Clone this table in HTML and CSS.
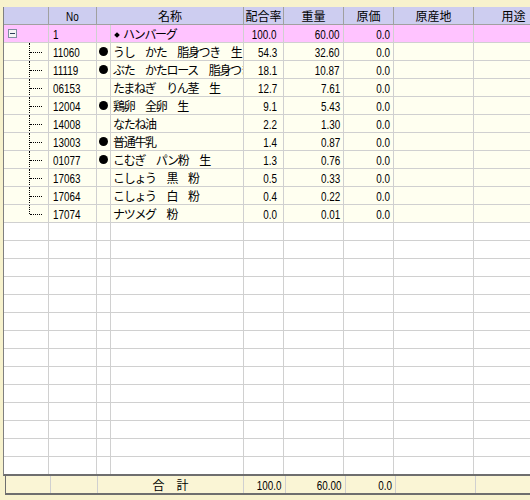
FILE: index.html
```html
<!DOCTYPE html>
<html lang="ja">
<head>
<meta charset="utf-8">
<link rel="stylesheet" href="styles.css">
</head>
<body>
<div class="grid">
  <div class="row head">
    <div class="cell c0"></div>
    <div class="cell c1 ctr"><span class="n">No</span></div>
    <div class="cell c23 ctr">名称</div>
    <div class="cell c4 ctr">配合率</div>
    <div class="cell c5 ctr">重量</div>
    <div class="cell c6 ctr">原価</div>
    <div class="cell c7 ctr">原産地</div>
    <div class="cell c8 ctr">用途</div>
  </div>
  <div class="row pink">
    <div class="cell c0"><span class="toggle"></span></div>
    <div class="cell c1"><span class="n">1</span></div>
    <div class="cell c2"></div>
    <div class="cell c3"><span class="dia"></span>ハンバーグ</div>
    <div class="cell c4 r"><span class="n">100.0</span></div>
    <div class="cell c5 r"><span class="n">60.00</span></div>
    <div class="cell c6 r"><span class="n">0.0</span></div>
    <div class="cell c7"></div>
    <div class="cell c8"></div>
  </div>
  <div class="row data">
    <div class="cell c0 tree"></div>
    <div class="cell c1"><span class="n">11060</span></div>
    <div class="cell c2"><span class="dot"></span></div>
    <div class="cell c3">うし　かた　脂身つき　生</div>
    <div class="cell c4 r"><span class="n">54.3</span></div>
    <div class="cell c5 r"><span class="n">32.60</span></div>
    <div class="cell c6 r"><span class="n">0.0</span></div>
    <div class="cell c7"></div>
    <div class="cell c8"></div>
  </div>
  <div class="row data">
    <div class="cell c0 tree"></div>
    <div class="cell c1"><span class="n">11119</span></div>
    <div class="cell c2"><span class="dot"></span></div>
    <div class="cell c3">ぶた　かたロース　脂身つき　生</div>
    <div class="cell c4 r"><span class="n">18.1</span></div>
    <div class="cell c5 r"><span class="n">10.87</span></div>
    <div class="cell c6 r"><span class="n">0.0</span></div>
    <div class="cell c7"></div>
    <div class="cell c8"></div>
  </div>
  <div class="row data">
    <div class="cell c0 tree"></div>
    <div class="cell c1"><span class="n">06153</span></div>
    <div class="cell c2"></div>
    <div class="cell c3">たまねぎ　りん茎　生</div>
    <div class="cell c4 r"><span class="n">12.7</span></div>
    <div class="cell c5 r"><span class="n">7.61</span></div>
    <div class="cell c6 r"><span class="n">0.0</span></div>
    <div class="cell c7"></div>
    <div class="cell c8"></div>
  </div>
  <div class="row data">
    <div class="cell c0 tree"></div>
    <div class="cell c1"><span class="n">12004</span></div>
    <div class="cell c2"><span class="dot"></span></div>
    <div class="cell c3">鶏卵　全卵　生</div>
    <div class="cell c4 r"><span class="n">9.1</span></div>
    <div class="cell c5 r"><span class="n">5.43</span></div>
    <div class="cell c6 r"><span class="n">0.0</span></div>
    <div class="cell c7"></div>
    <div class="cell c8"></div>
  </div>
  <div class="row data">
    <div class="cell c0 tree"></div>
    <div class="cell c1"><span class="n">14008</span></div>
    <div class="cell c2"></div>
    <div class="cell c3">なたね油</div>
    <div class="cell c4 r"><span class="n">2.2</span></div>
    <div class="cell c5 r"><span class="n">1.30</span></div>
    <div class="cell c6 r"><span class="n">0.0</span></div>
    <div class="cell c7"></div>
    <div class="cell c8"></div>
  </div>
  <div class="row data">
    <div class="cell c0 tree"></div>
    <div class="cell c1"><span class="n">13003</span></div>
    <div class="cell c2"><span class="dot"></span></div>
    <div class="cell c3">普通牛乳</div>
    <div class="cell c4 r"><span class="n">1.4</span></div>
    <div class="cell c5 r"><span class="n">0.87</span></div>
    <div class="cell c6 r"><span class="n">0.0</span></div>
    <div class="cell c7"></div>
    <div class="cell c8"></div>
  </div>
  <div class="row data">
    <div class="cell c0 tree"></div>
    <div class="cell c1"><span class="n">01077</span></div>
    <div class="cell c2"><span class="dot"></span></div>
    <div class="cell c3">こむぎ　パン粉　生</div>
    <div class="cell c4 r"><span class="n">1.3</span></div>
    <div class="cell c5 r"><span class="n">0.76</span></div>
    <div class="cell c6 r"><span class="n">0.0</span></div>
    <div class="cell c7"></div>
    <div class="cell c8"></div>
  </div>
  <div class="row data">
    <div class="cell c0 tree"></div>
    <div class="cell c1"><span class="n">17063</span></div>
    <div class="cell c2"></div>
    <div class="cell c3">こしょう　黒　粉</div>
    <div class="cell c4 r"><span class="n">0.5</span></div>
    <div class="cell c5 r"><span class="n">0.33</span></div>
    <div class="cell c6 r"><span class="n">0.0</span></div>
    <div class="cell c7"></div>
    <div class="cell c8"></div>
  </div>
  <div class="row data">
    <div class="cell c0 tree"></div>
    <div class="cell c1"><span class="n">17064</span></div>
    <div class="cell c2"></div>
    <div class="cell c3">こしょう　白　粉</div>
    <div class="cell c4 r"><span class="n">0.4</span></div>
    <div class="cell c5 r"><span class="n">0.22</span></div>
    <div class="cell c6 r"><span class="n">0.0</span></div>
    <div class="cell c7"></div>
    <div class="cell c8"></div>
  </div>
  <div class="row data">
    <div class="cell c0 tree last"></div>
    <div class="cell c1"><span class="n">17074</span></div>
    <div class="cell c2"></div>
    <div class="cell c3">ナツメグ　粉</div>
    <div class="cell c4 r"><span class="n">0.0</span></div>
    <div class="cell c5 r"><span class="n">0.01</span></div>
    <div class="cell c6 r"><span class="n">0.0</span></div>
    <div class="cell c7"></div>
    <div class="cell c8"></div>
  </div>
  <div class="row"><div class="cell c0"></div><div class="cell c1"></div><div class="cell c2"></div><div class="cell c3"></div><div class="cell c4"></div><div class="cell c5"></div><div class="cell c6"></div><div class="cell c7"></div><div class="cell c8"></div></div>
  <div class="row"><div class="cell c0"></div><div class="cell c1"></div><div class="cell c2"></div><div class="cell c3"></div><div class="cell c4"></div><div class="cell c5"></div><div class="cell c6"></div><div class="cell c7"></div><div class="cell c8"></div></div>
  <div class="row"><div class="cell c0"></div><div class="cell c1"></div><div class="cell c2"></div><div class="cell c3"></div><div class="cell c4"></div><div class="cell c5"></div><div class="cell c6"></div><div class="cell c7"></div><div class="cell c8"></div></div>
  <div class="row"><div class="cell c0"></div><div class="cell c1"></div><div class="cell c2"></div><div class="cell c3"></div><div class="cell c4"></div><div class="cell c5"></div><div class="cell c6"></div><div class="cell c7"></div><div class="cell c8"></div></div>
  <div class="row"><div class="cell c0"></div><div class="cell c1"></div><div class="cell c2"></div><div class="cell c3"></div><div class="cell c4"></div><div class="cell c5"></div><div class="cell c6"></div><div class="cell c7"></div><div class="cell c8"></div></div>
  <div class="row"><div class="cell c0"></div><div class="cell c1"></div><div class="cell c2"></div><div class="cell c3"></div><div class="cell c4"></div><div class="cell c5"></div><div class="cell c6"></div><div class="cell c7"></div><div class="cell c8"></div></div>
  <div class="row"><div class="cell c0"></div><div class="cell c1"></div><div class="cell c2"></div><div class="cell c3"></div><div class="cell c4"></div><div class="cell c5"></div><div class="cell c6"></div><div class="cell c7"></div><div class="cell c8"></div></div>
  <div class="row"><div class="cell c0"></div><div class="cell c1"></div><div class="cell c2"></div><div class="cell c3"></div><div class="cell c4"></div><div class="cell c5"></div><div class="cell c6"></div><div class="cell c7"></div><div class="cell c8"></div></div>
  <div class="row"><div class="cell c0"></div><div class="cell c1"></div><div class="cell c2"></div><div class="cell c3"></div><div class="cell c4"></div><div class="cell c5"></div><div class="cell c6"></div><div class="cell c7"></div><div class="cell c8"></div></div>
  <div class="row"><div class="cell c0"></div><div class="cell c1"></div><div class="cell c2"></div><div class="cell c3"></div><div class="cell c4"></div><div class="cell c5"></div><div class="cell c6"></div><div class="cell c7"></div><div class="cell c8"></div></div>
  <div class="row"><div class="cell c0"></div><div class="cell c1"></div><div class="cell c2"></div><div class="cell c3"></div><div class="cell c4"></div><div class="cell c5"></div><div class="cell c6"></div><div class="cell c7"></div><div class="cell c8"></div></div>
  <div class="row"><div class="cell c0"></div><div class="cell c1"></div><div class="cell c2"></div><div class="cell c3"></div><div class="cell c4"></div><div class="cell c5"></div><div class="cell c6"></div><div class="cell c7"></div><div class="cell c8"></div></div>
  <div class="row"><div class="cell c0"></div><div class="cell c1"></div><div class="cell c2"></div><div class="cell c3"></div><div class="cell c4"></div><div class="cell c5"></div><div class="cell c6"></div><div class="cell c7"></div><div class="cell c8"></div></div>
  <div class="row"><div class="cell c0"></div><div class="cell c1"></div><div class="cell c2"></div><div class="cell c3"></div><div class="cell c4"></div><div class="cell c5"></div><div class="cell c6"></div><div class="cell c7"></div><div class="cell c8"></div></div>
</div>
<div class="foot">
  <div class="fcell f0"></div>
  <div class="fcell f1"></div>
  <div class="fcell f2 ctr">合　計</div>
  <div class="fcell f3 r"><span class="n">100.0</span></div>
  <div class="fcell f4 r"><span class="n">60.00</span></div>
  <div class="fcell f5 r"><span class="n">0.0</span></div>
  <div class="fcell f6"></div>
  <div class="fcell f7"></div>
</div>
</body>
</html>
```

FILE: styles.css
```css
html, body {
  margin: 0;
  padding: 0;
}
body {
  width: 530px;
  height: 500px;
  overflow: hidden;
  background: #f7f2cd;
  font-family: "Noto Sans CJK JP", sans-serif;
  font-size: 12px;
  color: #000;
}
.grid {
  margin: 7px 0 0 3px;
  width: 560px;
  height: 467px;
  overflow: hidden;
  background: #fff;
  border-left: 1px solid #808080;
  border-bottom: 2px solid #6e6e6e;
}
.row {
  display: flex;
  height: 18px;
}
.cell {
  flex: none;
  box-sizing: border-box;
  height: 18px;
  line-height: 17px;
  border-right: 1px solid #d0d0d0;
  border-bottom: 1px solid #d0d0d0;
  overflow: hidden;
  white-space: nowrap;
  position: relative;
}
.c0 { width: 45px; }
.c1 { width: 48px; padding-left: 4px; }
.c2 { width: 14px; }
.c3 {
  width: 133px;
  padding-left: 2px;
  letter-spacing: -1.3px;
}
.c4 { width: 40px; padding-right: 6px; }
.c5 { width: 60px; padding-right: 3px; }
.c6 { width: 50px; padding-right: 3px; }
.c7 { width: 80px; }
.c8 { width: 80px; }
.c23 { width: 147px; }
.ctr { text-align: center; padding-left: 0; padding-right: 0; }
.r { text-align: right; }
.n {
  display: inline-block;
  font-family: "Liberation Sans", sans-serif;
  font-size: 13px;
  letter-spacing: 0;
  transform: scaleX(0.76);
  transform-origin: left center;
}
.r .n { transform-origin: right center; }
.ctr .n { transform-origin: center center; }
.head .cell {
  background: #cdcdf0;
  border-right-color: #a0a0a0;
  border-bottom-color: #a0a0a0;
}
.pink .cell { background: #ffc3ff; }
.data .cell { background: #fffff0; }

.toggle {
  position: absolute;
  left: 4px;
  top: 4px;
  width: 7px;
  height: 7px;
  border: 1px solid #7f8ea0;
  background: #f4f4f4;
}
.toggle::after {
  content: "";
  position: absolute;
  left: 1px;
  top: 3px;
  width: 5px;
  height: 1px;
  background: #2b3d5a;
}
.dia {
  display: inline-block;
  width: 4px;
  height: 4px;
  background: #000;
  transform: rotate(45deg);
  margin: 0 4px 2px 2px;
  vertical-align: middle;
}
.dot {
  position: absolute;
  left: 2px;
  top: 4px;
  width: 9px;
  height: 9px;
  border-radius: 50%;
  background: #000;
}
.tree::before {
  content: "";
  position: absolute;
  left: 25px;
  top: 0;
  height: 18px;
  border-left: 1px dotted #000;
}
.tree.last::before { height: 9px; }
.tree::after {
  content: "";
  position: absolute;
  left: 26px;
  top: 9px;
  width: 12px;
  border-top: 1px dotted #000;
}

.foot {
  display: flex;
  margin-left: 5px;
  width: 560px;
  height: 17px;
  background: #faf5d5;
  border-left: 1px solid #6e6e6e;
  border-bottom: 2px solid #6e6e6e;
}
.fcell {
  flex: none;
  box-sizing: border-box;
  height: 17px;
  line-height: 17px;
  border-right: 1px solid #d0d0d0;
  white-space: nowrap;
  overflow: hidden;
}
.f0 { width: 45px; }
.f1 { width: 47px; }
.f2 { width: 146px; }
.f3 { width: 42px; padding-right: 3px; }
.f4 { width: 60px; padding-right: 3px; }
.f5 { width: 50px; padding-right: 3px; }
.f6 { width: 80px; }
.f7 { width: 90px; }
```
